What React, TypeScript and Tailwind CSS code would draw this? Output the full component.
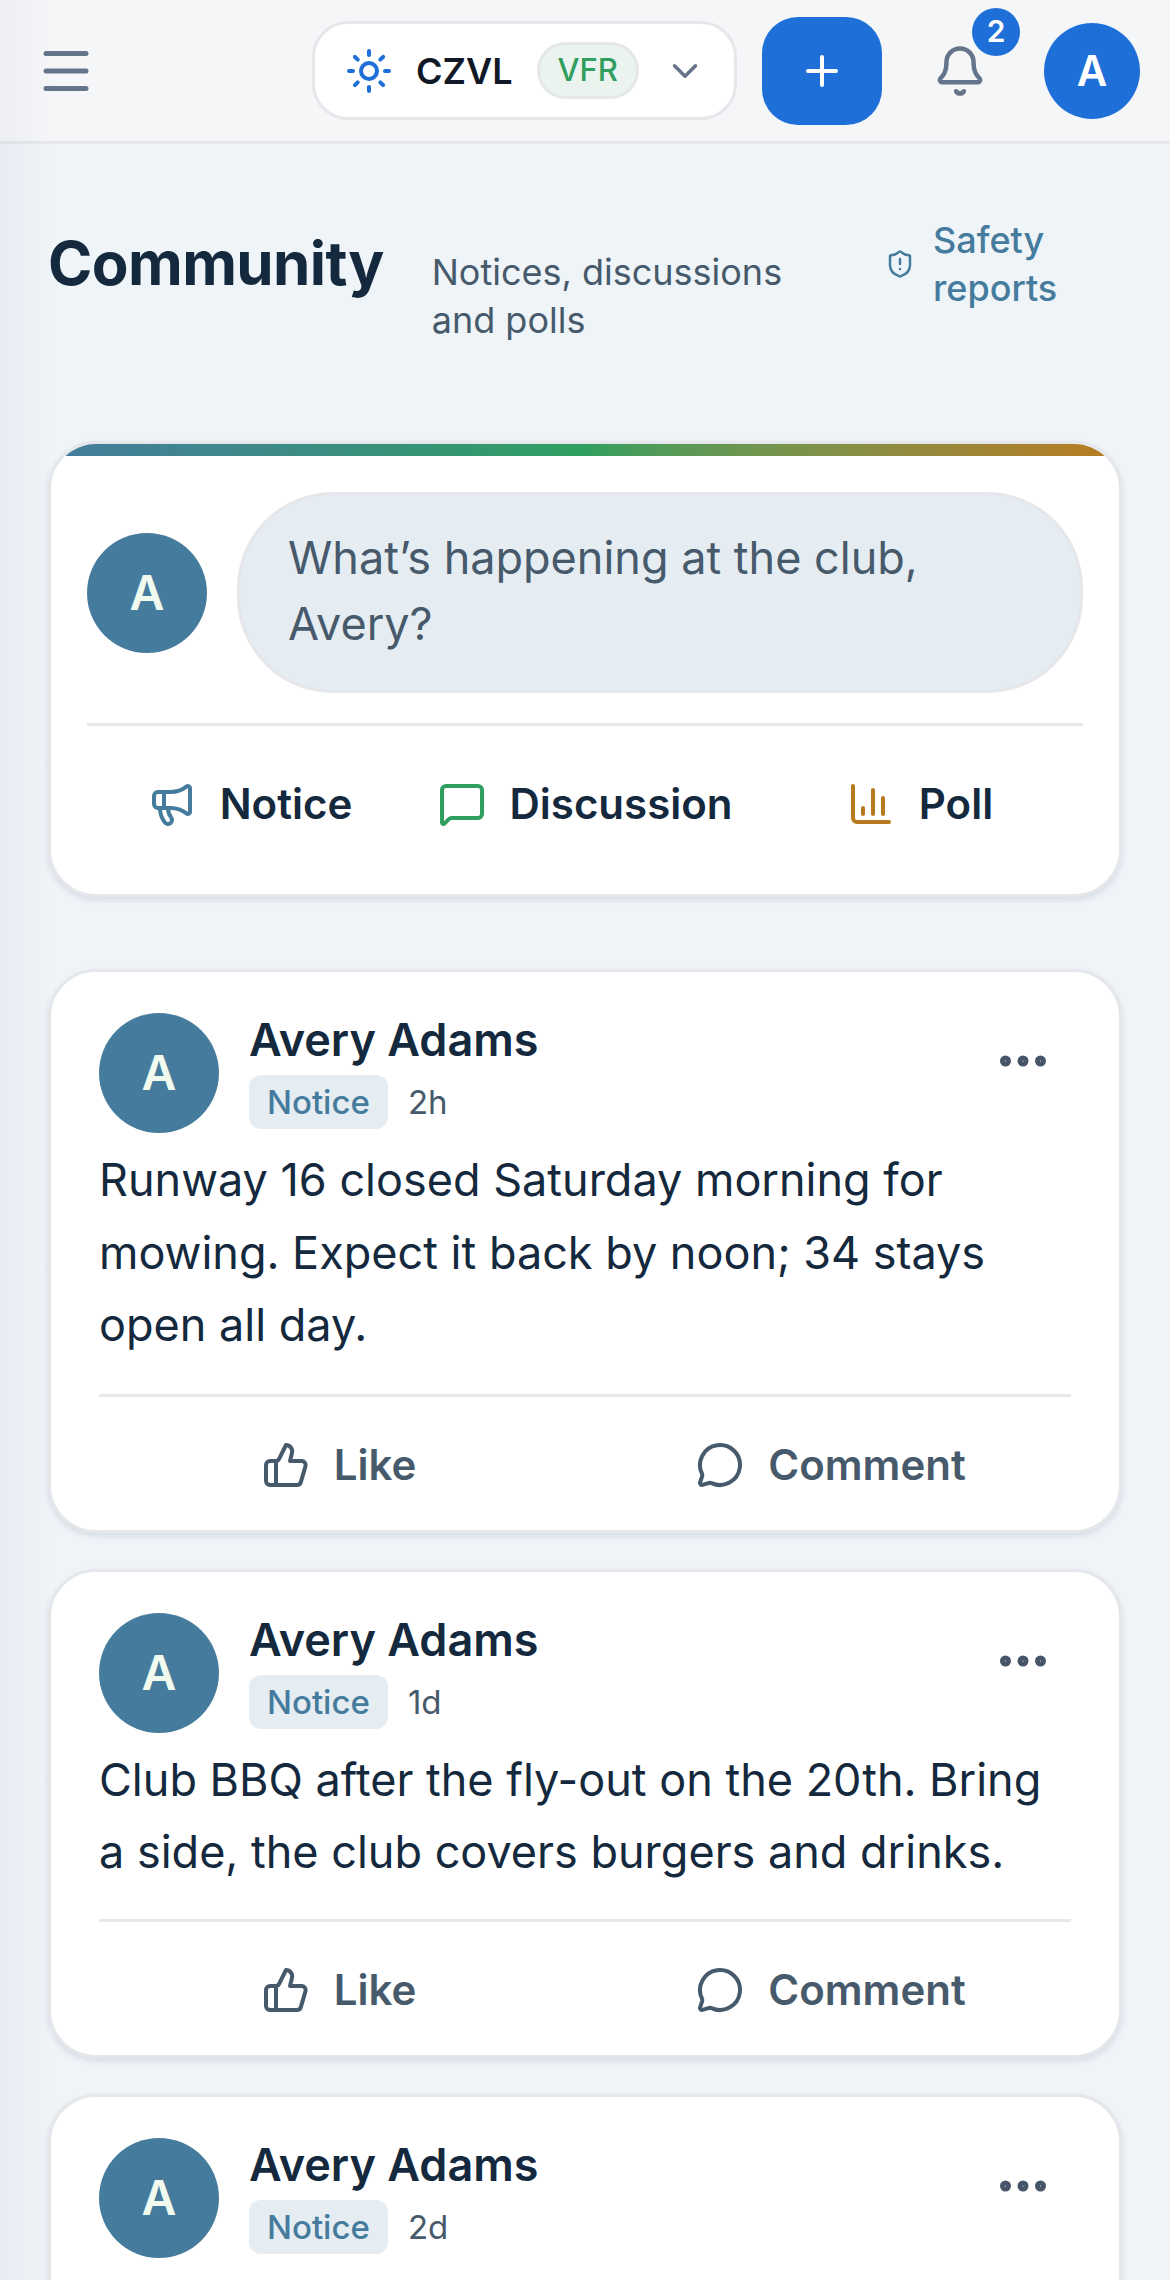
import { ChevronDown, Megaphone, MessageSquare, ChartColumn, Menu, Sun, Plus, Bell, ShieldAlert, ThumbsUp, MessageCircle, Ellipsis } from "lucide-react";

const font = { fontFamily: "Inter, 'Liberation Sans', sans-serif" };

type PostData = { age: string; body?: string; ruleGap?: string };

const posts: PostData[] = [
  { age: "2h", ruleGap: "mt-[32px]", body: "Runway 16 closed Saturday morning for mowing. Expect it back by noon; 34 stays open all day." },
  { age: "1d", ruleGap: "mt-[30px]", body: "Club BBQ after the fly-out on the 20th. Bring a side, the club covers burgers and drinks." },
  { age: "2d" },
];

function Avatar() {
  return (
    <div className="flex h-[120px] w-[120px] shrink-0 items-center justify-center rounded-full bg-[#457b9d] text-[48px] font-semibold text-[#f1faee]">
      A
    </div>
  );
}

function Post({ age, body, ruleGap }: PostData) {
  return (
    <article className="min-h-[260px] rounded-[48px] border-[3px] border-[#e5e7eb] bg-white px-[48px] pt-[41px] pb-[6px] shadow-[0_3px_6px_rgba(29,53,87,0.12)]">
      <div className="flex items-start gap-[30px]">
        <Avatar />
        <div className="min-w-0 flex-1">
          <div className="text-[45px] leading-[54px] font-semibold text-[#14293d]">Avery Adams</div>
          <div className="mt-[8px] flex items-center gap-[20px]">
            <span className="rounded-[12px] bg-[#e5ecf2] px-[18px] text-[33px] leading-[54px] font-medium text-[#457b9d]">Notice</span>
            <span className="text-[33px] leading-[54px] text-[#475a6b]">{age}</span>
          </div>
        </div>
        <Ellipsis className="mt-[18px] mr-[18px] h-[60px] w-[60px] text-[#475569]" strokeWidth={2.4} />
      </div>
      {body && (
        <>
          <p className="mt-[11px] text-[45px] leading-[72.5px] text-[#14293d]">{body}</p>
          <div className={`${ruleGap} flex gap-[12px] border-t-[3px] border-[#e5e7eb] pt-[9px]`}>
            <div className="flex h-[118px] flex-1 items-center justify-center gap-[24px] text-[42px] font-semibold text-[#475a6b]">
              <ThumbsUp className="h-[48px] w-[48px]" strokeWidth={2} />
              Like
            </div>
            <div className="flex h-[118px] flex-1 items-center justify-center gap-[24px] text-[42px] font-semibold text-[#475a6b]">
              <MessageCircle className="h-[48px] w-[48px]" strokeWidth={2} />
              Comment
            </div>
          </div>
        </>
      )}
    </article>
  );
}

export default function App() {
  return (
    <div style={font} className="relative h-[2280px] overflow-hidden bg-[#eff4f8]">
      <header className="flex h-[144px] items-center justify-between border-b-[3px] border-[#e5e7eb] bg-[#f5f6f8] pr-[30px] pl-[36px]">
        <Menu className="h-[60px] w-[60px] text-[#64748b]" strokeWidth={2} />
        <div className="flex items-center">
          <div className="flex h-[99px] w-[425px] items-center rounded-[36px] border-[3px] border-[#e5e7eb] bg-white pr-[28px] pl-[30px]">
            <Sun className="h-[48px] w-[48px] text-[#1f6fd8]" strokeWidth={2} />
            <span className="ml-[23px] text-[36px] font-semibold text-[#111827]">CZVL</span>
            <span className="ml-[24px] flex h-[57px] items-center rounded-full border-[3px] border-[#e5e7eb] bg-[#eaf3ee] px-[18px] text-[31px] font-medium text-[#2f9e5f]">VFR</span>
            <ChevronDown className="ml-auto h-[42px] w-[42px] text-[#64748b]" strokeWidth={2} />
          </div>
          <div className="ml-[25px] flex h-[108px] w-[120px] items-center justify-center rounded-[36px] bg-[#1f6fd8]">
            <Plus className="h-[48px] w-[48px] text-white" strokeWidth={2} />
          </div>
          <div className="relative ml-[30px] flex h-[96px] w-[96px] items-center justify-center">
            <Bell className="h-[54px] w-[54px] text-[#64748b]" strokeWidth={2} />
            <span className="absolute top-[-15px] right-[-12px] flex h-[48px] w-[48px] items-center justify-center rounded-full bg-[#1f6fd8] text-[30px] font-semibold text-white">2</span>
          </div>
          <div className="ml-[36px] flex h-[96px] w-[96px] items-center justify-center rounded-full bg-[#1f6fd8] text-[42px] font-semibold text-white">A</div>
        </div>
      </header>

      <main className="flex flex-col px-[48px] pt-[72px]">
        <div className="flex items-start">
          <h1 className="mt-[11px] text-[60px] leading-[72px] font-bold tracking-[-0.6px] text-[#14293d]">Community</h1>
          <p className="mt-[32px] ml-[48px] w-[380px] text-[36px] leading-[48px] text-[#475a6b]">Notices, discussions and polls</p>
          <div className="ml-auto flex items-center gap-[18px] pr-[49px]">
            <ShieldAlert className="h-[30px] w-[30px] text-[#457b9d]" strokeWidth={2} />
            <span className="w-[140px] text-[36px] leading-[48px] font-medium text-[#457b9d]">Safety reports</span>
          </div>
        </div>

        <section className="mt-[97px] overflow-hidden rounded-[48px] border-[3px] border-[#e5e7eb] bg-white shadow-[0_3px_6px_rgba(29,53,87,0.12)]">
          <div className="h-[12px] bg-gradient-to-r from-[#457b9d] via-[#2f9e5f] to-[#b87a1e]" />
          <div className="px-[36px] pt-[36px]">
            <div className="flex items-center gap-[30px]">
              <Avatar />
              <div className="flex-1 rounded-[96px] border-[3px] border-[#e5e7eb] bg-[#e5ecf2] px-[48px] pt-[30px] pb-[33px] text-[45px] leading-[66px] text-[#475a6b]">
                What’s happening at the club, Avery?
              </div>
            </div>
            <div className="mt-[30px] grid grid-cols-3 gap-[9px] border-t-[3px] border-[#e5e7eb] pt-[46px] pb-[59px]">
              <div className="flex items-center justify-center gap-[24px] text-[42px] font-semibold text-[#14293d]">
                <Megaphone className="h-[48px] w-[48px] text-[#457b9d]" strokeWidth={2} />
                Notice
              </div>
              <div className="flex items-center justify-center gap-[24px] text-[42px] font-semibold text-[#14293d]">
                <MessageSquare className="h-[48px] w-[48px] text-[#2f9e5f]" strokeWidth={2} />
                Discussion
              </div>
              <div className="flex items-center justify-center gap-[24px] text-[42px] font-semibold text-[#14293d]">
                <ChartColumn className="h-[48px] w-[48px] text-[#b87a1e]" strokeWidth={2} />
                Poll
              </div>
            </div>
          </div>
        </section>

        <div className="mt-[72px] flex flex-col gap-[36px]">
          {posts.map((p) => (
            <Post key={p.age} {...p} />
          ))}
        </div>
      </main>

      {/* Soft shade along the left edge of the page */}
      <div className="pointer-events-none absolute top-0 left-0 h-full w-[54px] bg-gradient-to-r from-[rgba(29,53,87,0.04)] to-transparent" />
    </div>
  );
}
